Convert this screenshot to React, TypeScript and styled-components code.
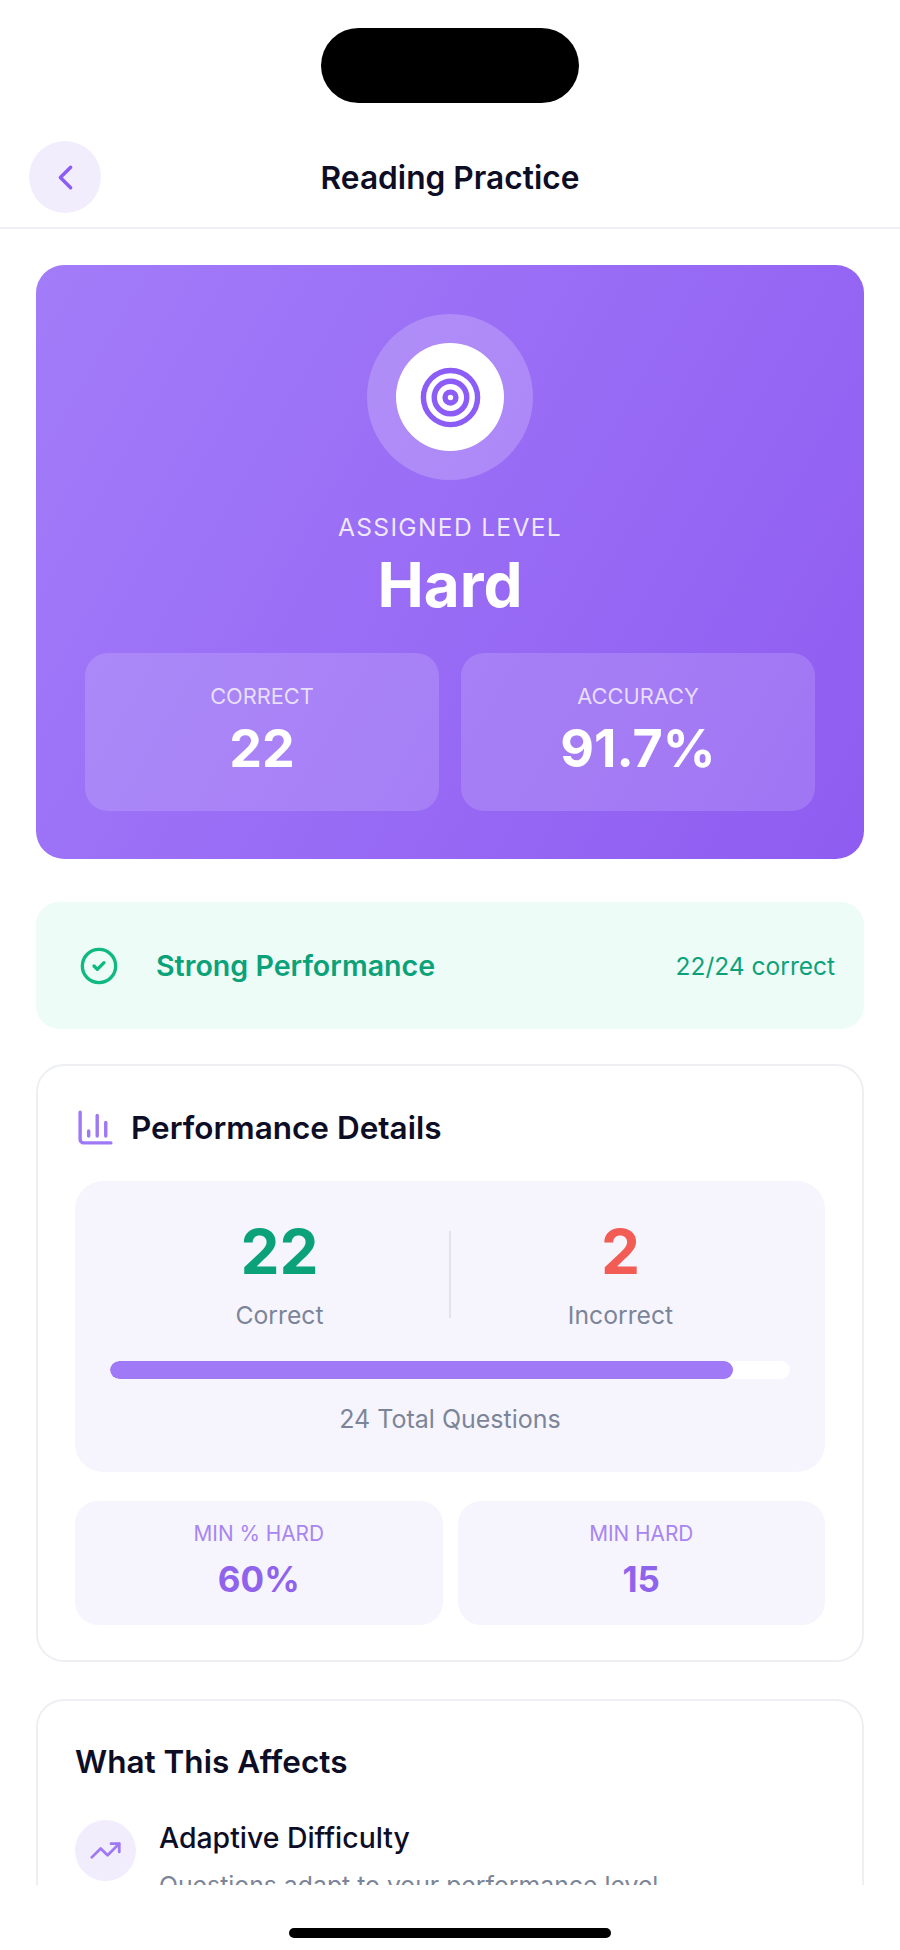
import React from "react";
import styled, { createGlobalStyle } from "styled-components";
import { ChevronLeft, Target, CircleCheck, ChartColumn, TrendingUp } from "lucide-react";

const Global = createGlobalStyle`
  html, body { margin: 0; padding: 0; background: #fff; }
  body { font-family: Inter, "Liberation Sans", sans-serif; }
  * { box-sizing: border-box; }
`;

const Phone = styled.div`
  width: 900px; height: 1950px; display: flex; flex-direction: column; background: #fff; overflow: hidden;
`;
const Status = styled.div`
  height: 141px; padding-top: 28px; display: flex; justify-content: center; flex: none;
`;
const Island = styled.div`
  width: 258px; height: 75px; border-radius: 38px; background: #000;
`;
const Header = styled.header`
  flex: none; height: 88px; padding: 0 29px 16px; position: relative; display: flex; align-items: flex-start;
  border-bottom: 2px solid #eeeef3;
`;
const BackButton = styled.div`
  width: 72px; height: 72px; border-radius: 50%; background: #f1edfd; color: #8b5cf6;
  display: flex; align-items: center; justify-content: center;
`;
const Title = styled.h1`
  flex: 1; margin: 0 72px 0 0; text-align: center; font-size: 31.7px; line-height: 74px; font-weight: 600; color: #0d0d25;
`;
const Main = styled.main`
  flex: 1; min-height: 0; overflow: hidden; padding: 36px 36px 0;
`;
const Hero = styled.section`
  height: 594px; border-radius: 28px; padding: 49px 49px 0; display: flex; flex-direction: column; align-items: center;
  background: linear-gradient(120deg, #a27cf9 0%, #8f5cf1 100%); color: #fff;
`;
const Halo = styled.div`
  width: 166px; height: 166px; border-radius: 50%; background: rgba(255,255,255,.2);
  display: flex; align-items: center; justify-content: center; flex: none;
`;
const Disc = styled.div`
  width: 108px; height: 108px; border-radius: 50%; background: #fff; color: #8b5cf6;
  display: flex; align-items: center; justify-content: center;
`;
const Eyebrow = styled.div`
  margin-top: 30px; font-size: 24.6px; line-height: 34px; letter-spacing: 1.3px; color: rgba(255,255,255,.85);
`;
const Level = styled.div`
  margin-top: 3px; font-size: 62px; line-height: 76px; font-weight: 700;
`;
const StatsRow = styled.div`
  align-self: stretch; margin-top: 30px; display: grid; grid-template-columns: 1fr 1fr; gap: 22px;
`;
const Stat = styled.div`
  height: 158px; border-radius: 23px; background: rgba(255,255,255,.15); padding-top: 29px; text-align: center;
`;
const StatLabel = styled.div`
  font-size: 21.8px; line-height: 28px; color: rgba(255,255,255,.75);
`;
const StatValue = styled.div`
  margin-top: 8px; font-size: 52px; line-height: 62px; font-weight: 700;
`;
const Banner = styled.section`
  margin-top: 43px; height: 127px; border-radius: 23px; background: #eefcf7; color: #0ca279;
  padding: 0 29px 0 43px; display: flex; align-items: center;
`;
const BannerTitle = styled.div`
  flex: 1; margin-left: 37px; font-size: 28.6px; font-weight: 600;
`;
const BannerNote = styled.div`
  font-size: 24.5px;
`;
const Card = styled.section`
  margin-top: 35px; border: 2px solid #edeff3; border-radius: 28px; padding: 0 37px; background: #fff;
`;
const DetailsCard = styled(Card)`
  height: 598px;
`;
const CardHead = styled.div`
  height: 115px; padding-top: 8px; display: flex; align-items: center; gap: 15px; color: #9f79f5;
`;
const CardTitle = styled.h2`
  margin: 0; font-size: 31.5px; font-weight: 600; color: #0d0d25;
`;
const Panel = styled.div`
  height: 291px; border-radius: 28px; background: #f6f5fe; padding: 38px 35px 0;
`;
const Compare = styled.div`
  display: flex; align-items: flex-start; height: 142px;
`;
const CompareCol = styled.div`
  flex: 1; text-align: center;
`;
const Divider = styled.div`
  flex: none; width: 2px; height: 87px; margin-top: 12px; background: #e3e3ec;
`;
const Big = styled.div<{ $color: string }>`
  font-size: 62px; line-height: 66px; font-weight: 700; color: ${p => p.$color};
`;
const Small = styled.div`
  margin-top: 14px; font-size: 24.7px; line-height: 32px; color: #7c8598;
`;
const Track = styled.div`
  height: 18px; border-radius: 9px; background: #fff; overflow: hidden;
`;
const Fill = styled.div`
  height: 100%; border-radius: 9px; background: #9f79f6;
`;
const Total = styled.div`
  margin-top: 25px; text-align: center; font-size: 25px; line-height: 30px; color: #7c8598;
`;
const MiniRow = styled.div`
  margin-top: 29px; display: grid; grid-template-columns: 1fr 1fr; gap: 15px;
`;
const Mini = styled.div`
  height: 124px; border-radius: 23px; background: #f6f5fe; padding-top: 20px; text-align: center;
`;
const MiniLabel = styled.div`
  font-size: 20.8px; line-height: 26px; color: #a885f0;
`;
const MiniValue = styled.div`
  margin-top: 10px; font-size: 35px; line-height: 44px; font-weight: 700; color: #8f63ec;
`;
const AffectsCard = styled(Card)`
  margin-top: 37px; padding-top: 40px; padding-bottom: 40px;
`;
const AffectsTitle = styled.h2`
  margin: 0; font-size: 31.5px; line-height: 42px; font-weight: 600; color: #0d0d25;
`;
const Item = styled.div`
  margin-top: 37px; display: flex; gap: 23px;
`;
const ItemIcon = styled.div`
  flex: none; width: 61px; height: 61px; border-radius: 50%; background: #f1edfd; color: #9f79f5;
  display: flex; align-items: center; justify-content: center;
`;
const ItemName = styled.div`
  font-size: 28.4px; line-height: 36px; font-weight: 500; color: #0d0d25;
`;
const ItemText = styled.div`
  margin-top: 13px; font-size: 24.8px; line-height: 32px; color: #7c8598;
`;
const Bottom = styled.div`
  flex: none; height: 65px; padding-top: 43px; display: flex; justify-content: center;
`;
const HomeBar = styled.div`
  width: 322px; height: 10px; border-radius: 5px; background: #000;
`;

export default function App() {
  return (
    <Phone>
      <Global />
      <Status><Island /></Status>
      <Header>
        <BackButton><ChevronLeft size={41} strokeWidth={2} /></BackButton>
        <Title>Reading Practice</Title>
      </Header>
      <Main>
        <Hero>
          <Halo><Disc><Target size={65} strokeWidth={2} /></Disc></Halo>
          <Eyebrow>ASSIGNED LEVEL</Eyebrow>
          <Level>Hard</Level>
          <StatsRow>
            <Stat><StatLabel>CORRECT</StatLabel><StatValue>22</StatValue></Stat>
            <Stat><StatLabel>ACCURACY</StatLabel><StatValue>91.7%</StatValue></Stat>
          </StatsRow>
        </Hero>
        <Banner>
          <CircleCheck size={40} strokeWidth={2} color="#10b981" />
          <BannerTitle>Strong Performance</BannerTitle>
          <BannerNote>22/24 correct</BannerNote>
        </Banner>
        <DetailsCard>
          <CardHead>
            <ChartColumn size={41} strokeWidth={2} />
            <CardTitle>Performance Details</CardTitle>
          </CardHead>
          <Panel>
            <Compare>
              <CompareCol><Big $color="#0ca279">22</Big><Small>Correct</Small></CompareCol>
              <Divider />
              <CompareCol><Big $color="#f25c54">2</Big><Small>Incorrect</Small></CompareCol>
            </Compare>
            <Track><Fill style={{ width: `${(22 / 24) * 100}%` }} /></Track>
            <Total>24 Total Questions</Total>
          </Panel>
          <MiniRow>
            <Mini><MiniLabel>MIN % HARD</MiniLabel><MiniValue>60%</MiniValue></Mini>
            <Mini><MiniLabel>MIN HARD</MiniLabel><MiniValue>15</MiniValue></Mini>
          </MiniRow>
        </DetailsCard>
        <AffectsCard>
          <AffectsTitle>What This Affects</AffectsTitle>
          <Item>
            <ItemIcon><TrendingUp size={33} strokeWidth={2} /></ItemIcon>
            <div>
              <ItemName>Adaptive Difficulty</ItemName>
              <ItemText>Questions adapt to your performance level</ItemText>
            </div>
          </Item>
        </AffectsCard>
      </Main>
      <Bottom><HomeBar /></Bottom>
    </Phone>
  );
}
